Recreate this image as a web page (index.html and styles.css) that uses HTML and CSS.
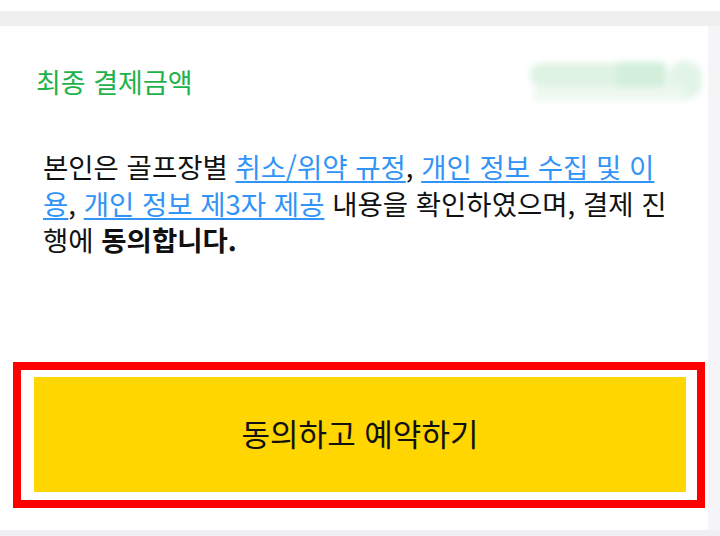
FILE: index.html
```html
<!DOCTYPE html>
<html lang="ko">
<head>
<meta charset="utf-8">
<link rel="stylesheet" href="styles.css">
</head>
<body>
<div class="top-gap"></div>
<div class="band"></div>
<div class="card-row">
  <main class="card">
    <div class="title-row">
      <h2 class="title">최종 결제금액</h2>
      <div class="amount" aria-hidden="true">
        <span class="blob b1"></span>
        <span class="blob b2"></span>
        <span class="blob b3"></span>
      </div>
    </div>
    <p class="agree">본인은 골프장별 <a href="#">취소/위약 규정</a>, <a href="#">개인 정보 수집 및 이용</a>, <a href="#">개인 정보 제3자 제공</a> 내용을 확인하였으며, 결제 진행에 <strong>동의합니다.</strong></p>
    <div class="highlight">
      <button class="cta" type="button">동의하고 예약하기</button>
    </div>
  </main>
  <div class="side"></div>
</div>
<div class="bottom"></div>
</body>
</html>
```
FILE: styles.css
```css
* { box-sizing: border-box; }
html, body { margin: 0; padding: 0; }
body {
  width: 720px;
  height: 536px;
  overflow: hidden;
  background: #ffffff;
  font-family: "Noto Sans CJK KR", "Noto Sans", sans-serif;
  color: #111111;
}
.top-gap { height: 11px; background: #ffffff; }
.band { height: 15px; background: #efefef; }
.card-row { display: flex; height: 504px; }
.card {
  width: 708px;
  background: #ffffff;
  display: flex;
  flex-direction: column;
  padding-top: 34px;
}
.side { flex: 1; background: #f5f5f7; }
.bottom { height: 6px; background: #f0f0f2; }

.title-row {
  display: flex;
  justify-content: space-between;
  align-items: center;
  padding: 0 6px 0 36px;
  height: 44px;
}
.title {
  margin: 0;
  font-size: 27px;
  font-weight: 400;
  color: #1fb24a;
  line-height: 36px;
}
.amount {
  position: relative;
  width: 174px;
  height: 42px;
  filter: blur(3px);
}
.blob { position: absolute; display: block; border-radius: 14px; }
.b1 { left: 2px; top: 2px; width: 130px; height: 24px; background: #dff3e4; }
.b2 { left: 88px; top: 1px; width: 50px; height: 28px; background: #d3efdb; border-radius: 4px; }
.b3 { left: 140px; top: 0; width: 34px; height: 38px; background: #e2f4e7; border-radius: 16px; }
.amount::after {
  content: "";
  position: absolute;
  left: 6px; top: 26px; width: 150px; height: 14px;
  background: #eef8f0;
}

.agree {
  margin: 44px 0 0;
  padding: 0 30px 0 43px;
  font-size: 27.5px;
  line-height: 36.5px;
}
.agree a { color: #3194f6; text-decoration: underline; text-underline-offset: 3px; text-decoration-thickness: 2px; }
.agree strong { font-weight: 700; }

.highlight {
  margin: auto 0 22px 13px;
  width: 692px;
  border: 8px solid #ff0000;
  padding: 7px 11px 8px 13px;
}
.cta {
  display: flex;
  align-items: center;
  justify-content: center;
  width: 100%;
  height: 115px;
  border: 0;
  background: #ffd600;
  color: #111111;
  font-family: "Noto Sans CJK KR", "Noto Sans", sans-serif;
  font-size: 31px;
  font-weight: 400;
  padding: 0 0 4px;
}
```
